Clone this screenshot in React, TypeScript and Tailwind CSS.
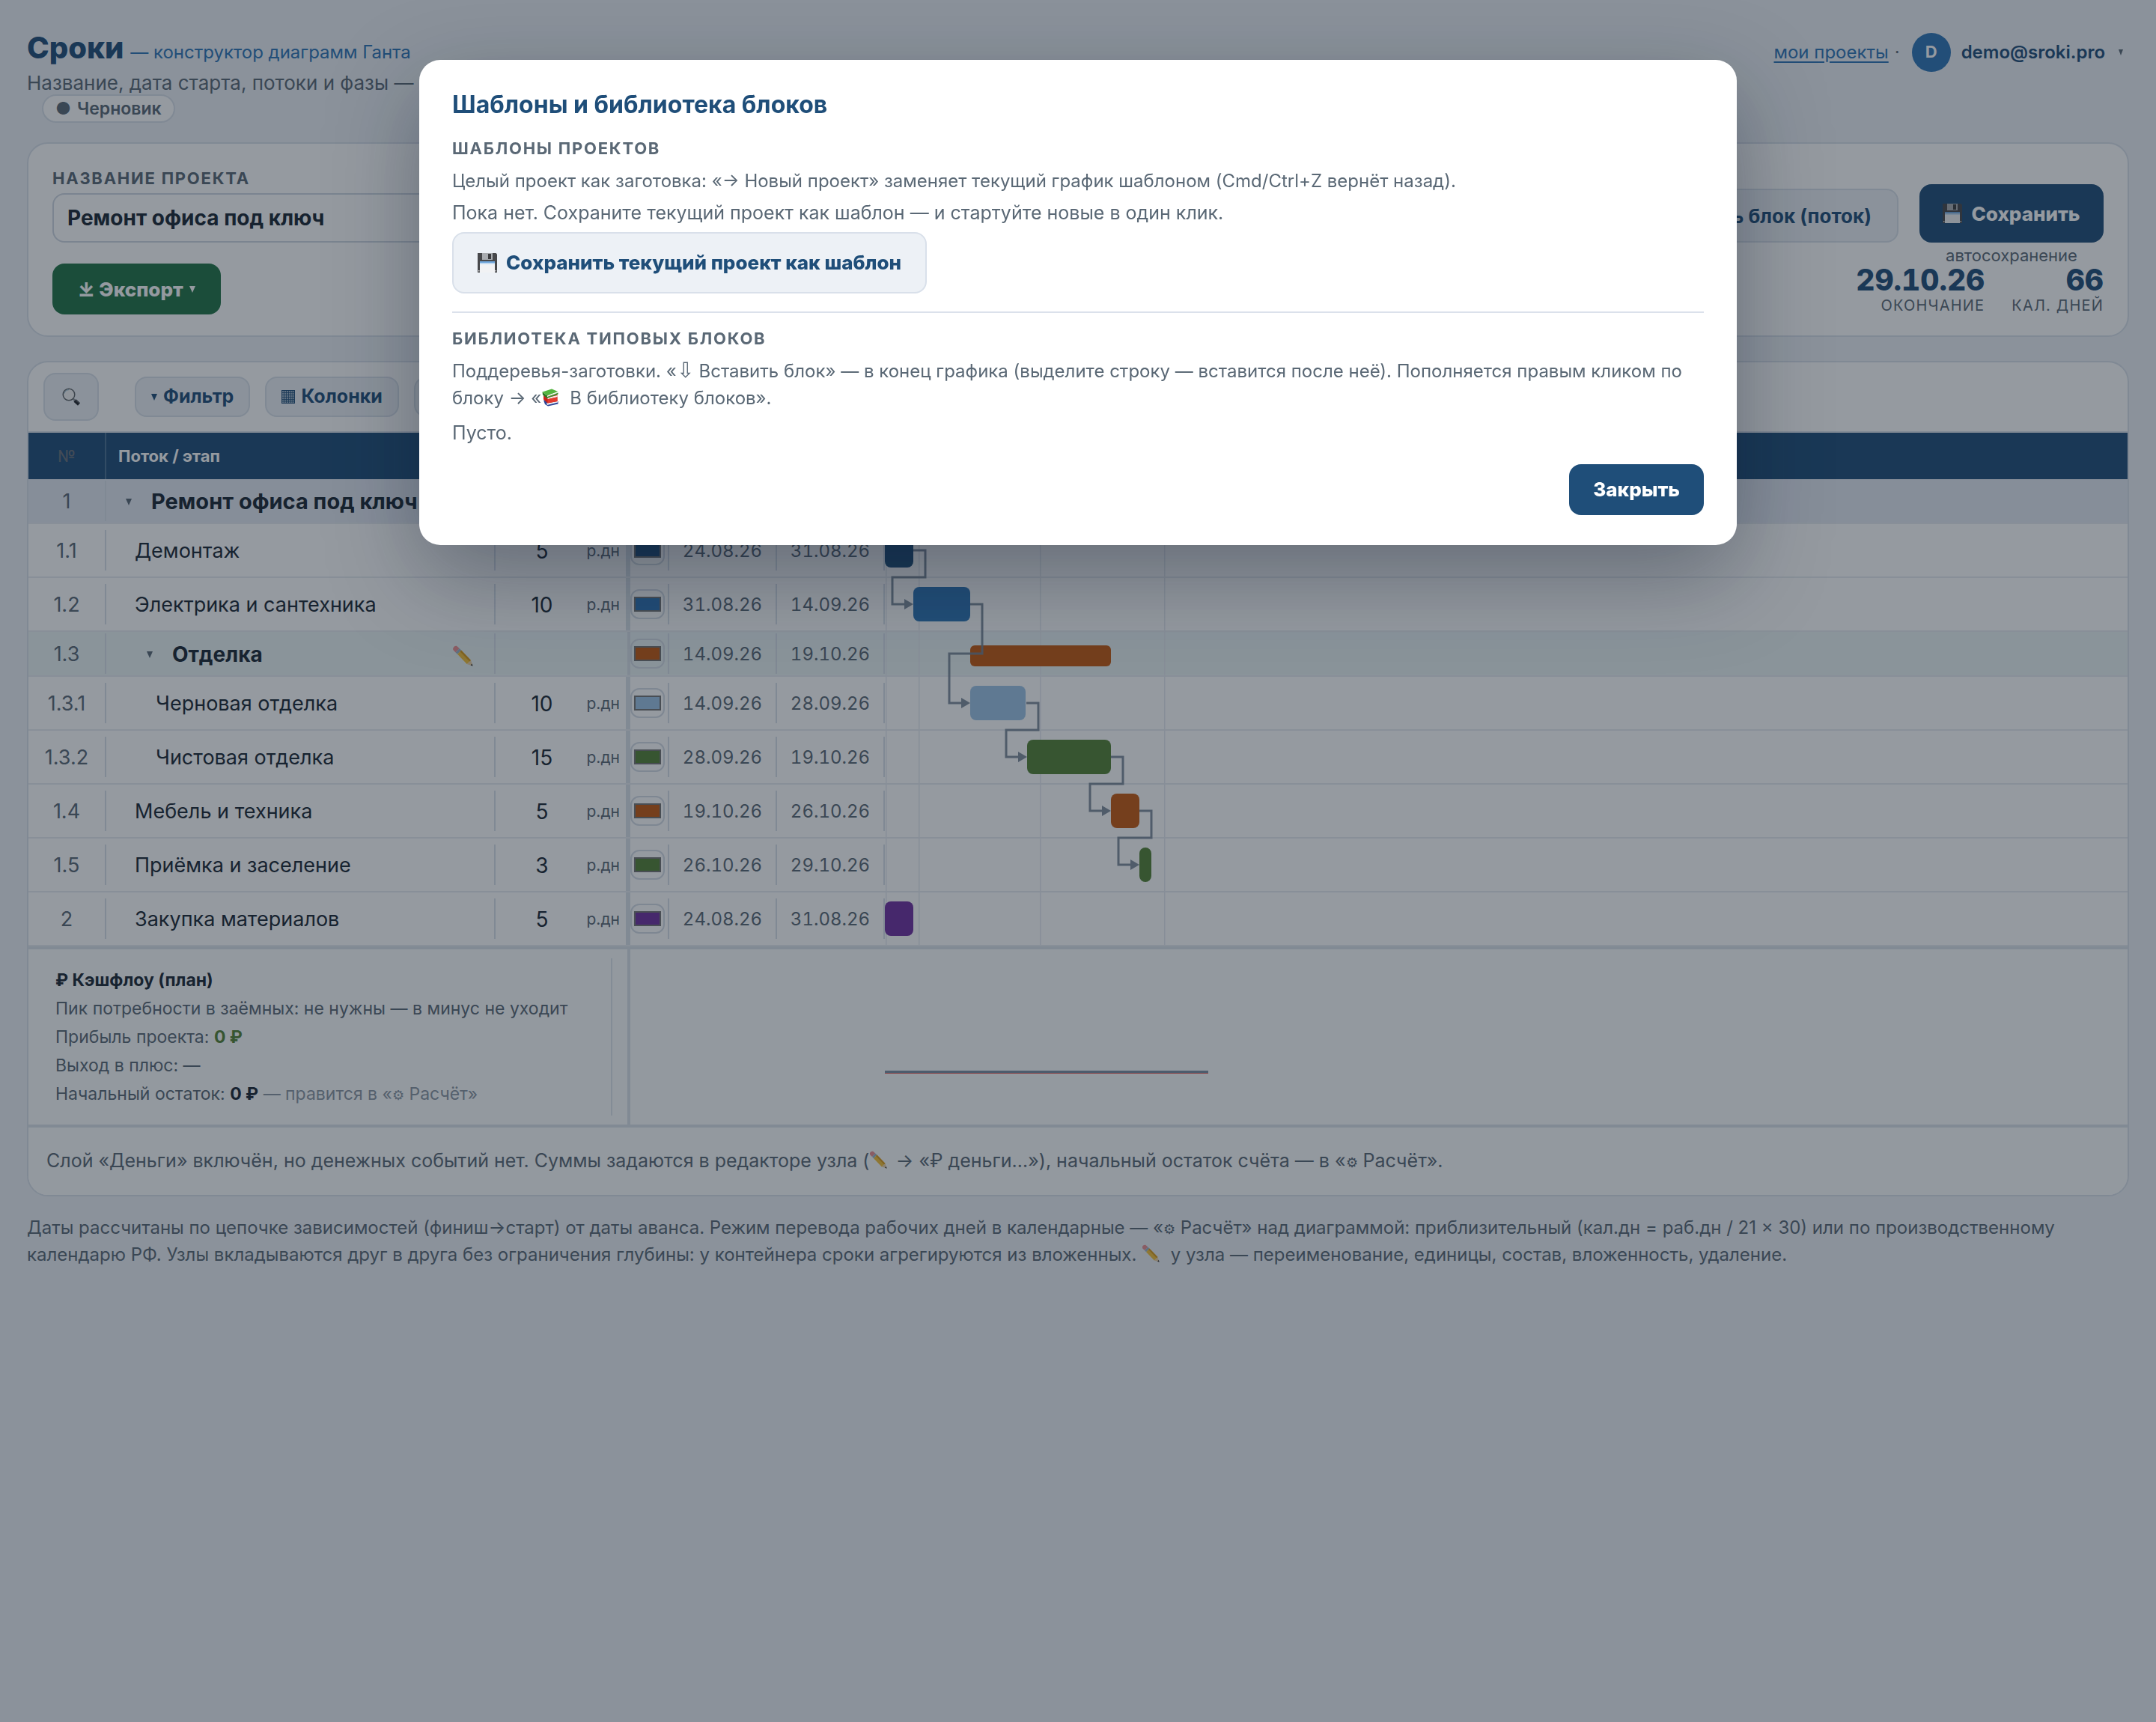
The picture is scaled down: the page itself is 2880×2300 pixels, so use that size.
import { ReactNode } from "react";

interface Task {
  no: string;
  name: string;
  nameClass: string;
  days?: string;
  color: string;
  start: string;
  end: string;
  group?: "root" | "nested";
}

const tasks: Task[] = [
  { no: "1", name: "Ремонт офиса под ключ", nameClass: "pl-[26px] text-[29px] font-bold", color: "#1f4e79", start: "24.08.26", end: "29.10.26", group: "root" },
  { no: "1.1", name: "Демонтаж", nameClass: "pl-[38px] text-[27px]", days: "5", color: "#1f4e79", start: "24.08.26", end: "31.08.26" },
  { no: "1.2", name: "Электрика и сантехника", nameClass: "pl-[38px] text-[27px]", days: "10", color: "#2e75b6", start: "31.08.26", end: "14.09.26" },
  { no: "1.3", name: "Отделка", nameClass: "pl-[54px] text-[28px] font-bold", color: "#c55a11", start: "14.09.26", end: "19.10.26", group: "nested" },
  { no: "1.3.1", name: "Черновая отделка", nameClass: "pl-[66px] text-[27px]", days: "10", color: "#9dc3e6", start: "14.09.26", end: "28.09.26" },
  { no: "1.3.2", name: "Чистовая отделка", nameClass: "pl-[66px] text-[27px]", days: "15", color: "#548235", start: "28.09.26", end: "19.10.26" },
  { no: "1.4", name: "Мебель и техника", nameClass: "pl-[38px] text-[27px]", days: "5", color: "#c55a11", start: "19.10.26", end: "26.10.26" },
  { no: "1.5", name: "Приёмка и заселение", nameClass: "pl-[38px] text-[27px]", days: "3", color: "#548235", start: "26.10.26", end: "29.10.26" },
  { no: "2", name: "Закупка материалов", nameClass: "pl-[38px] text-[27px]", days: "5", color: "#7030a0", start: "24.08.26", end: "31.08.26" },
];

// x, y, width, height inside the chart area
const bars = [
  { x: 0, y: 16, w: 356, h: 28, color: "#1f4e79" },
  { x: 0, y: 72, w: 38, h: 46, color: "#1f4e79" },
  { x: 38, y: 144, w: 76, h: 46, color: "#2e75b6" },
  { x: 114, y: 222, w: 188, h: 28, color: "#c55a11" },
  { x: 114, y: 276, w: 74, h: 46, color: "#9dc3e6" },
  { x: 190, y: 348, w: 112, h: 46, color: "#548235" },
  { x: 302, y: 420, w: 38, h: 46, color: "#c55a11" },
  { x: 340, y: 492, w: 16, h: 46, color: "#548235" },
  { x: 0, y: 564, w: 38, h: 46, color: "#7030a0" },
];

// finish of one bar -> start of the next
const links = [
  { x1: 38, y1: 95, x2: 38, y2: 167 },
  { x1: 114, y1: 167, x2: 114, y2: 299 },
  { x1: 189, y1: 299, x2: 190, y2: 371 },
  { x1: 302, y1: 371, x2: 302, y2: 443 },
  { x1: 340, y1: 443, x2: 340, y2: 515 },
];

const months = [1, 45, 207, 373];

function Floppy() {
  return (
    <svg className="size-[26px] shrink-0" viewBox="0 0 26 26" aria-hidden="true">
      <path d="M0 0h24.500l1.500 1.500V26H0z" fill="#47484b" />
      <rect x="6" y="0" width="14" height="9" fill="#a9acb0" />
      <rect x="14" y="1" width="4" height="7" fill="#3b3c3f" />
      <rect x="3" y="11.500" width="20" height="14.500" fill="#f1f2f4" />
      <rect x="3" y="11" width="20" height="2.500" fill="#6fa6dc" />
      <rect x="3" y="13.500" width="20" height="1.500" fill="#c9def2" />
      <rect x="1" y="23" width="1.500" height="1.500" fill="#dfe0e2" />
      <rect x="23.500" y="23" width="1.500" height="1.500" fill="#dfe0e2" />
    </svg>
  );
}

function Magnifier() {
  return (
    <svg className="size-6" viewBox="0 0 24 24" aria-hidden="true">
      <path d="M14.500 14.500 18 18" stroke="#8c9299" strokeWidth="2.500" />
      <path d="m17 17 5.500 5" stroke="#23262b" strokeWidth="4.500" />
      <path d="m17.500 16 5 4.500" stroke="#777c84" strokeWidth="0.800" />
      <circle cx="9" cy="9" r="7.800" fill="#f4f4f4" stroke="#5f6468" strokeWidth="1.500" />
      <path d="M3 7.500A6.500 6.500 0 0 1 9 2.600" stroke="#8fb6cc" strokeWidth="1" fill="none" />
    </svg>
  );
}

function Pencil({ className = "size-6" }: { className?: string }) {
  return (
    <svg className={`inline-block ${className}`} viewBox="0 0 26 26" aria-hidden="true">
      <path d="M1.200 5.600Q.4 3.600 2 2T5.600.8L9 3.800 4.300 8.800z" fill="#ec8f92" />
      <path d="m4.300 8.800 4.700-5 2.300 2.200-4.700 5z" fill="#9cb2c8" />
      <path d="m6.600 11 4.700-5 12 12.500-5 4.700z" fill="#f3bf3a" />
      <path d="M9.800 7.600 11.300 6l12 12.500-1.600 1.600z" fill="#d99a1c" />
      <path d="m18.300 23.200 5-4.700 2.200 7z" fill="#ecd0a4" />
      <path d="m22.800 24.700 1.900-1.900.9 2.800z" fill="#33302c" />
    </svg>
  );
}

function Books() {
  return (
    <svg className="mr-[14px] inline-block size-6 align-[-3px]" viewBox="0 0 24 24" aria-hidden="true">
      <path d="M3 15.500 5 21l4 2.500 13.500-3V17z" fill="#2c4597" />
      <path d="m7 19.500 15-3v2L8 22z" fill="#eceff5" />
      <path d="M3 9v5.500l5.500 5L21.500 17V8z" fill="#c8231c" />
      <path d="m8.500 12 13-3v2.200l-13 3z" fill="#f6ece8" />
      <path d="m8.500 14.200 13-3V17l-13 2.500z" fill="#e33a2e" />
      <path d="m1.500 4.500.5 4L8 13V9.500z" fill="#2c7a24" />
      <path d="M1.500 4.500 14 .5l8.500 3.500L8 9.500z" fill="#55b440" />
      <path d="M8 9.500 22.500 4v1.500L8 11.200z" fill="#f2f5ee" />
      <path d="M8 11.200 22.500 5.500v2L8 13z" fill="#3c9430" />
    </svg>
  );
}

function Gear() {
  return <span className="text-[18px] leading-none">⚙︎</span>;
}

function Caret({ className = "text-current" }: { className?: string }) {
  return (
    <svg className={`h-[9px] w-2 shrink-0 ${className}`} viewBox="0 0 8 9" aria-hidden="true">
      <path d="M0 0h8L4 9z" fill="currentColor" />
    </svg>
  );
}

function GridIcon() {
  return (
    <svg className="size-[18px]" viewBox="0 0 18 18" stroke="currentColor" aria-hidden="true">
      <rect x="0.500" y="0.500" width="17" height="17" fill="#9db2c6" />
      <path d="M3.500 0v18M6.500 0v18M9.500 0v18M12.500 0v18M15 0v18M0 3.500h18M0 6.500h18M0 9.500h18M0 12.500h18M0 15h18" strokeWidth="0.800" />
    </svg>
  );
}

function ToolButton({ children }: { children: ReactNode }) {
  return (
    <button className="flex h-[54px] items-center gap-2 rounded-2xl border-2 border-[#d9e0ea] bg-[#edf1f6] px-5 text-[25px] font-bold text-[#1f4e79]">
      {children}
    </button>
  );
}

function Cell({ children, className = "" }: { children?: ReactNode; className?: string }) {
  return (
    <div className={`flex h-[54px] items-center border-r-2 border-[#d9e0ea] ${className}`}>{children}</div>
  );
}

function TaskRow({ task }: { task: Task }) {
  const rowClass =
    task.group === "root" ? "bg-[#e4e9f3]" : task.group === "nested" ? "bg-[#ebf4f5]" : "bg-white";
  const td = `border-b-2 border-[#e8ecf1] p-0 ${task.group ? "h-[60px]" : "h-[72px]"}`;

  return (
    <tr className={rowClass}>
      <td className={td}>
        <Cell className="justify-center pt-[2px] text-[27px] text-[#5a6875]">{task.no}</Cell>
      </td>
      <td className={td}>
        <Cell className={`pt-[2px] pr-7 whitespace-nowrap ${task.nameClass}`}>
          {task.group && <Caret className="mr-[26px] text-[#5a6875]" />}
          <span>{task.name}</span>
          {task.group === "nested" && (
            <button className="ml-auto" aria-label="Редактировать">
              <Pencil className="size-7" />
            </button>
          )}
        </Cell>
      </td>
      <td className={td}>
        <div
          className={`flex items-center border-[#dae2e9] pt-[2px] pl-3 ${
            task.group ? "h-[58px] border-r-4" : "h-[70px] border-r-6"
          }`}
        >
          {task.days && (
            <>
              <input
                className="w-[100px] bg-transparent text-center text-[28px]"
                aria-label={`Длительность: ${task.name}`}
                defaultValue={task.days}
              />
              <span className="ml-auto pr-2 text-[21px] text-[#5a6875]">р.дн</span>
            </>
          )}
        </div>
      </td>
      <td className={td}>
        <Cell>
          <input
            type="color"
            aria-label={`Цвет: ${task.name}`}
            defaultValue={task.color}
            className="h-10 w-[46px] rounded-xl border-2 border-[#d5dce6] bg-transparent px-[3px] py-2 [&::-webkit-color-swatch]:rounded-none [&::-webkit-color-swatch]:border-2 [&::-webkit-color-swatch]:border-[#767676] [&::-webkit-color-swatch-wrapper]:p-0"
          />
        </Cell>
      </td>
      <td className={td}>
        <Cell className="justify-center pt-[2px] text-2xl text-[#5a6875] tabular-nums">{task.start}</Cell>
      </td>
      <td className={td}>
        <Cell className="justify-center pt-[2px] text-2xl text-[#5a6875] tabular-nums">{task.end}</Cell>
      </td>
      <td className={td} />
    </tr>
  );
}

function Chart() {
  return (
    <svg className="pointer-events-none absolute top-[62px] left-[1144px]" width="600" height="624" aria-hidden="true">
      {months.map((x) => (
        <rect key={x} x={x} y="0" width="1.500" height="622" fill="#e6eaf0" />
      ))}
      {bars.map((b, i) => (
        <rect key={i} x={b.x} y={b.y} width={b.w} height={b.h} rx={b.h < 40 ? 6 : 8} fill={b.color} />
      ))}
      {links.map((l, i) => (
        <g key={i} opacity="0.9">
          <path
            d={`M${l.x1} ${l.y1}h16V${(l.y1 + l.y2) / 2}H${l.x2 - 28}V${l.y2}h17`}
            fill="none"
            stroke="#748393"
            strokeWidth="3"
          />
          <path d={`M${l.x2 - 12} ${l.y2 - 7}l12 7-12 7z`} fill="#748393" />
        </g>
      ))}
    </svg>
  );
}

function Header() {
  return (
    <header className="flex items-start justify-between">
      <div>
        <h1 className="text-[40px] leading-12 font-extrabold text-[#1f4e79]">
          Сроки <span className="text-2xl font-normal text-[#2e75b6]">— конструктор диаграмм Ганта</span>
        </h1>
        <p className="mt-2 text-[26px] leading-[30px] text-[#5a6875]">
          Название, дата старта, потоки и фазы — график строится сам.
        </p>
        <span className="ml-5 inline-flex h-[38px] items-center gap-2 rounded-full border-2 border-[#d9e0ea] bg-white px-4 text-[23px] font-semibold text-[#5a6875]">
          <span>●</span>
          Черновик
        </span>
      </div>
      <div className="mt-1 flex items-center pr-2 text-2xl">
        <a href="#projects" className="text-[#2e75b6] underline underline-offset-4">
          мои проекты
        </a>
        <span className="ml-2 text-[#5a6875]">·</span>
        <button className="ml-4 flex items-center gap-[14px] font-semibold text-[#1f4e79]">
          <span className="flex size-[52px] items-center justify-center rounded-full bg-[#2e75b6] text-[22px] font-bold text-white">
            D
          </span>
          demo@sroki.pro
          <svg className="ml-1 h-2 w-[6px] text-[#5a6875]" viewBox="0 0 6 8" aria-hidden="true">
            <path d="M0 0h6L3 8z" fill="currentColor" />
          </svg>
        </button>
      </div>
    </header>
  );
}

function ProjectCard() {
  return (
    <section className="mt-[26px] rounded-[28px] border-2 border-[#d9e0ea] bg-white px-8 pt-8 pb-7">
      <div className="flex items-end gap-7">
        <div className="flex flex-1 flex-col gap-[6px]">
          <label htmlFor="project-name" className="text-[22px] leading-7 font-bold tracking-[0.08em] text-[#5a6875] uppercase">
            Название проекта
          </label>
          <input
            id="project-name"
            defaultValue="Ремонт офиса под ключ"
            className="h-[66px] w-full rounded-2xl border-2 border-[#d0d8e2] bg-white px-[18px] text-[28px] font-bold"
          />
        </div>
        <button className="h-[72px] rounded-2xl border-2 border-[#d9e0ea] bg-[#edf1f6] px-[34px] text-[26px] font-bold text-[#1f4e79]">
          + Добавить блок (поток)
        </button>
        <button className="flex h-[78px] w-[246px] items-center justify-center gap-3 rounded-2xl bg-[#1f4e79] text-[26px] font-extrabold text-white">
          <Floppy />
          Сохранить
        </button>
      </div>
      <div className="flex h-7 items-end justify-end">
        <span className="w-[246px] text-center text-[22px] leading-none text-[#5a6875]">автосохранение</span>
      </div>
      <div className="flex items-start justify-between">
        <button className="flex h-[68px] items-center gap-2 rounded-2xl bg-[#217346] px-[34px] text-[26px] font-extrabold text-white">
          <span>⤓ Экспорт</span>
          <Caret />
        </button>
        <dl className="flex gap-9 text-right">
          <div className="flex flex-col-reverse">
            <dt className="text-xl leading-6 tracking-[0.06em] text-[#5a6875] uppercase">Окончание</dt>
            <dd className="text-[39px] leading-11 font-extrabold text-[#1f4e79] tabular-nums">29.10.26</dd>
          </div>
          <div className="flex flex-col-reverse">
            <dt className="text-xl leading-6 tracking-[0.06em] text-[#5a6875] uppercase">Кал. дней</dt>
            <dd className="text-[39px] leading-11 font-extrabold text-[#1f4e79] tabular-nums">66</dd>
          </div>
        </dl>
      </div>
    </section>
  );
}

function CashFlow() {
  return (
    <div className="flex border-t-4 border-b-2 border-[#dae2e9] bg-[#fcfdfe]">
      <div className="w-[804px] border-r-4 border-[#dae2e9] py-3">
        <div className="w-[780px] border-r-2 border-[#dfe5ed] px-9 py-[10px] text-[23px] leading-[38px] text-[#5a6875]">
          <p className="font-bold text-[#1a2733]">₽ Кэшфлоу (план)</p>
          <p>Пик потребности в заёмных: не нужны — в минус не уходит</p>
          <p>
            Прибыль проекта: <b className="text-[#548235]">0 ₽</b>
          </p>
          <p>Выход в плюс: —</p>
          <p>
            Начальный остаток: <b className="text-[#1a2733]">0 ₽</b>{" "}
            <span className="text-[#8b96a3]">
              — правится в «<Gear /> Расчёт»
            </span>
          </p>
        </div>
      </div>
      <div className="flex-1 pt-[162px] pl-[340px]">
        <svg width="432" height="4" aria-hidden="true">
          <rect width="432" height="3" fill="#7d8ea3" />
          <rect y="3" width="432" height="1" fill="#e0605c" />
        </svg>
      </div>
    </div>
  );
}

function GanttCard() {
  return (
    <section className="mt-8 overflow-hidden rounded-[28px] border-2 border-[#d9e0ea] bg-white">
      <div className="flex h-[94px] items-center gap-5 border-b-2 border-[#d9e0ea] px-5">
        <button
          aria-label="Поиск"
          className="mr-7 flex h-16 w-[74px] items-center justify-center rounded-2xl border-2 border-[#d9e0ea] bg-[#edf1f6]"
        >
          <Magnifier />
        </button>
        <ToolButton>
          <Caret />
          Фильтр
        </ToolButton>
        <ToolButton>
          <GridIcon />
          Колонки
        </ToolButton>
        <ToolButton>
          <Gear /> Расчёт
        </ToolButton>
      </div>
      <div className="relative">
        <table className="w-full table-fixed border-separate border-spacing-0">
          <colgroup>
            <col className="w-[104px]" />
            <col className="w-[520px]" />
            <col className="w-[180px]" />
            <col className="w-[52px]" />
            <col className="w-36" />
            <col className="w-36" />
            <col />
          </colgroup>
          <thead>
            <tr className="h-[62px] bg-[#1f4e79] text-[22px] text-white">
              <th className="border-r-2 border-[#4c7194] p-0 font-normal text-[#6b7078]">№</th>
              <th className="p-0 pl-4 text-left">Поток / этап</th>
              <th className="p-0">Дней</th>
              <th className="p-0" />
              <th className="p-0">Начало</th>
              <th className="p-0">Конец</th>
              <th className="p-0" />
            </tr>
          </thead>
          <tbody>
            {tasks.map((task) => (
              <TaskRow key={task.no} task={task} />
            ))}
          </tbody>
        </table>
        <Chart />
      </div>
      <CashFlow />
      <p className="border-t-2 border-[#dae2e9] bg-[#fcfdfe] px-6 pt-[26px] pb-7 text-[25px] leading-9 text-[#5a6875]">
        Слой «Деньги» включён, но денежных событий нет. Суммы задаются в редакторе узла (
        <Pencil className="mr-1 size-6 align-[-2px]" /> → «₽ деньги…»), начальный остаток счёта — в «<Gear /> Расчёт».
      </p>
    </section>
  );
}

function TemplatesDialog() {
  return (
    <div className="fixed inset-0 flex items-start justify-center bg-[#141e2d]/45 pt-20">
      <div
        role="dialog"
        aria-modal="true"
        aria-labelledby="templates-title"
        className="w-full max-w-[1760px] rounded-[28px] bg-white px-11 py-10 text-2xl leading-9 text-[#5a6875] shadow-[0_40px_120px_rgba(10,20,40,0.35)]"
      >
        <h2 id="templates-title" className="text-[32px] leading-10 font-bold text-[#1f4e79]">
          Шаблоны и библиотека блоков
        </h2>
        <h3 className="mt-6 text-[22px] leading-7 font-bold tracking-[0.08em] uppercase">Шаблоны проектов</h3>
        <p className="mt-3">
          Целый проект как заготовка: «→ Новый проект» заменяет текущий график шаблоном (Cmd/Ctrl+Z вернёт назад).
        </p>
        <p className="mt-[6px] text-[25px]">
          Пока нет. Сохраните текущий проект как шаблон — и стартуйте новые в один клик.
        </p>
        <button className="mt-2 flex h-[82px] items-center gap-3 rounded-2xl border-2 border-[#d9e0ea] bg-[#edf1f6] px-8 text-[26px] font-extrabold text-[#1f4e79]">
          <Floppy />
          Сохранить текущий проект как шаблон
        </button>
        <hr className="mt-6 border-t-2 border-[#dbe1eb]" />
        <h3 className="mt-5 text-[22px] leading-7 font-bold tracking-[0.08em] uppercase">Библиотека типовых блоков</h3>
        <p className="mt-3">
          Поддеревья-заготовки. «<span className="text-[28px] leading-none">⇩</span> Вставить блок» — в конец графика
          (выделите строку — вставится после неё). Пополняется правым кликом по блоку → «<Books />В библиотеку блоков».
        </p>
        <p className="mt-[10px] text-[25px]">Пусто.</p>
        <div className="mt-6 flex justify-end">
          <button className="h-[68px] rounded-2xl bg-[#1f4e79] px-8 text-[26px] font-extrabold text-white">Закрыть</button>
        </div>
      </div>
    </div>
  );
}

export default function App() {
  return (
    <div className="min-h-screen bg-[#edf1f6] px-9 pt-10 pb-10 font-['Inter',sans-serif] text-[#1a2733]">
      <Header />
      <ProjectCard />
      <GanttCard />
      <p className="mt-6 text-2xl leading-9 text-[#5a6875]">
        Даты рассчитаны по цепочке зависимостей (финиш→старт) от даты аванса. Режим перевода рабочих дней в
        календарные — «<Gear /> Расчёт» над диаграммой: приблизительный (кал.дн = раб.дн / 21 × 30) или по
        производственному календарю РФ. Узлы вкладываются друг в друга без ограничения глубины: у контейнера сроки
        агрегируются из вложенных. <Pencil className="mr-2 size-6 align-[-2px]" /> у узла — переименование, единицы,
        состав, вложенность, удаление.
      </p>
      <TemplatesDialog />
    </div>
  );
}
